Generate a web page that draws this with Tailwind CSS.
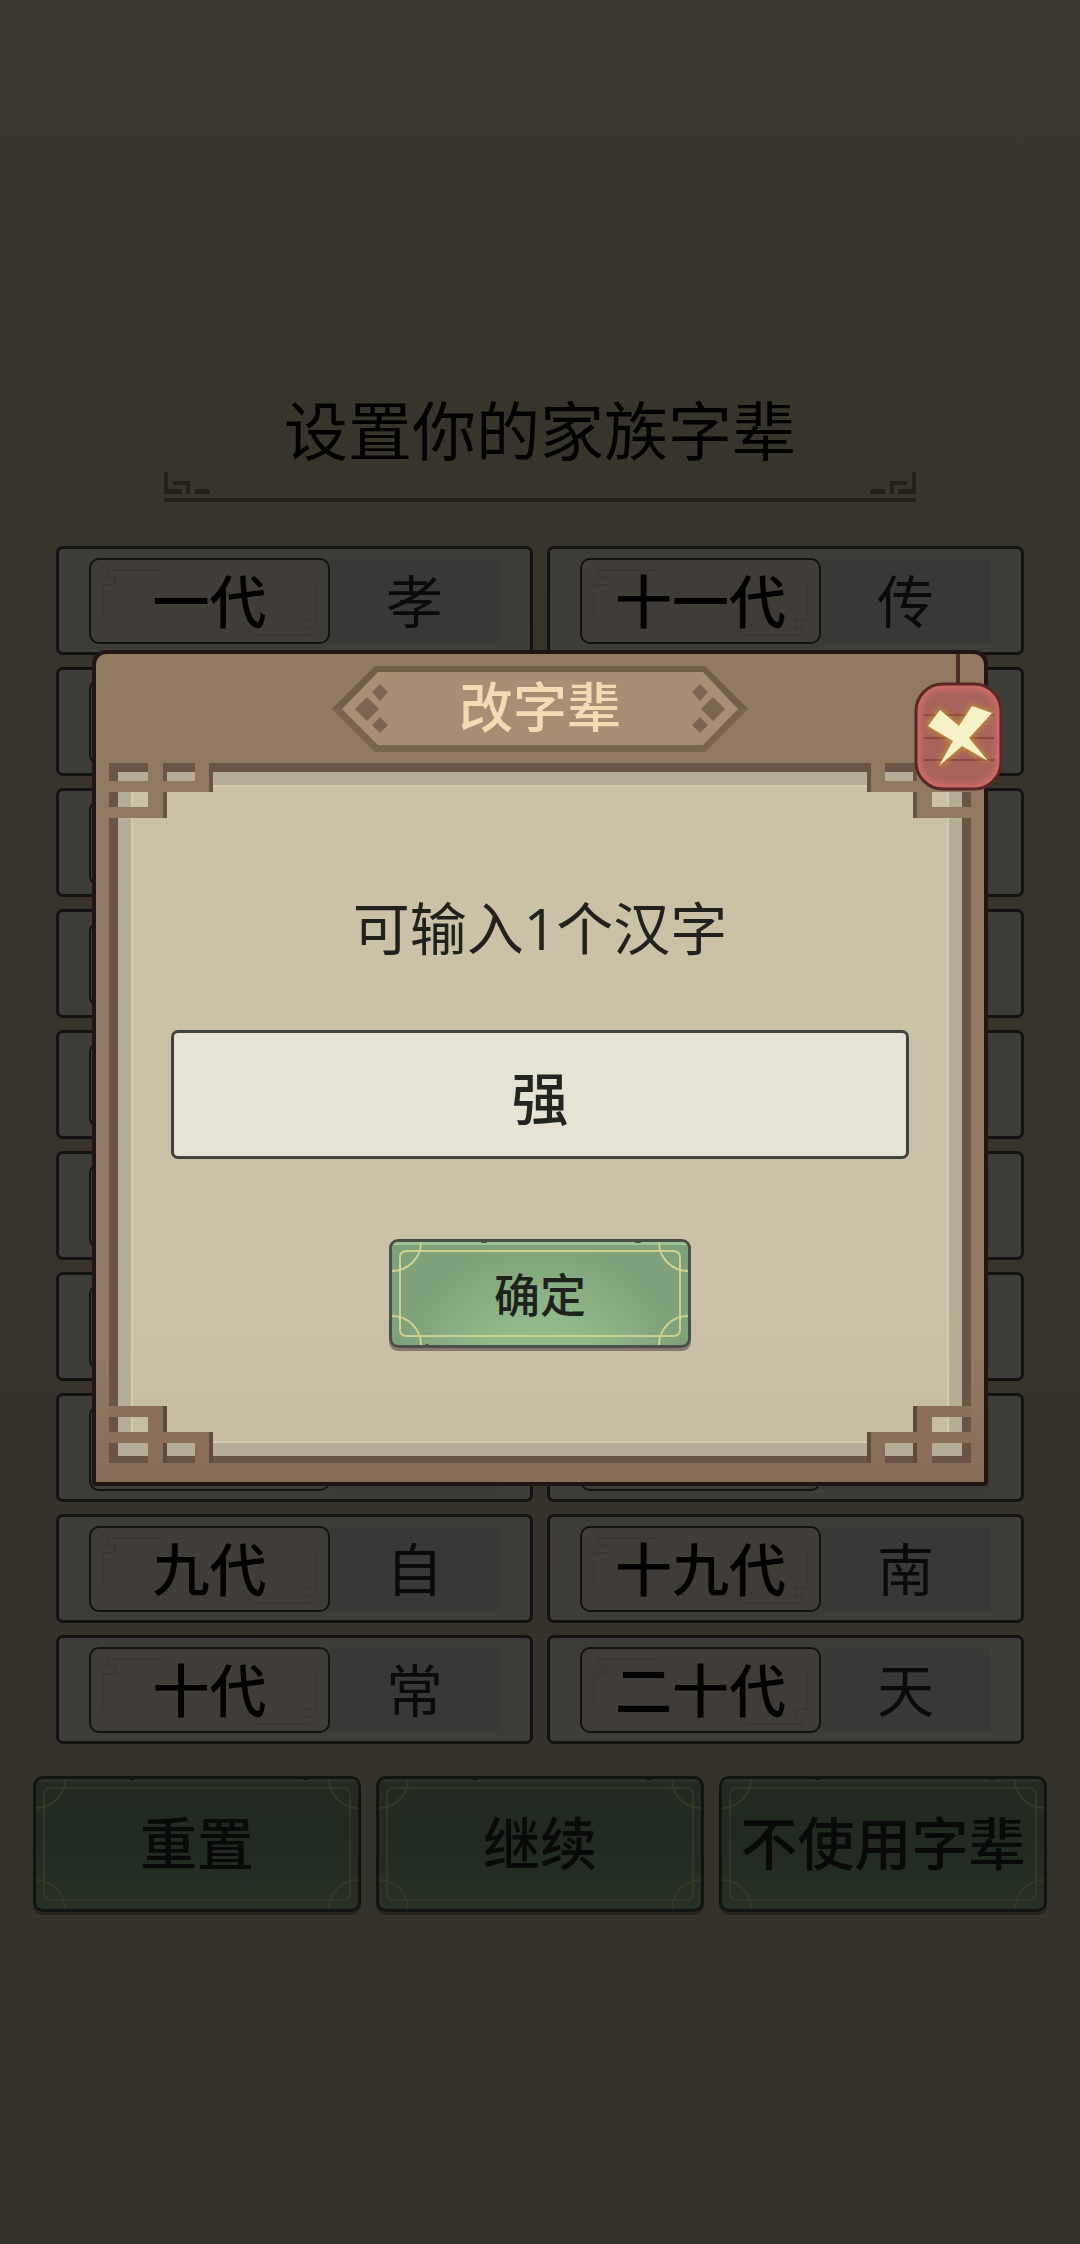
<!DOCTYPE html>
<html lang="zh-CN">
<head>
    <meta charset="UTF-8">
    <meta name="viewport" content="width=device-width, initial-scale=1.0">
    <title>设置你的家族字辈</title>
    <script src="https://cdn.jsdelivr.net/npm/@tailwindcss/browser@4"></script>
</head>
<body class="min-h-screen bg-[#37332b] bg-linear-to-b from-[#38352c] to-[#35312a] font-['Noto_Sans_CJK_SC',sans-serif] font-medium text-black">

    <!-- Generation name settings -->
    <main class="pt-[391px]">
        <header class="mx-[164px] border-b-4 border-[#201f1a] pb-1">
            <h1 class="text-center text-[64px] leading-[72px] font-normal whitespace-nowrap">设置你的家族字辈</h1>
            <div class="mt-[9px] flex justify-between">
                <svg class="w-[46px] h-[22px]" viewBox="0 0 46 22" fill="#201f1a" aria-hidden="true">
                    <path d="M0 0h4v17h14v5H0zM9 9h17v13h-4v-9H9zM31 17h14v5H31z"/>
                </svg>
                <svg class="w-[46px] h-[22px] -scale-x-100" viewBox="0 0 46 22" fill="#201f1a" aria-hidden="true">
                    <path d="M0 0h4v17h14v5H0zM9 9h17v13h-4v-9H9zM31 17h14v5H31z"/>
                </svg>
            </div>
        </header>

        <ul id="generationList" class="mt-11 mx-14 grid grid-cols-2 grid-rows-10 grid-flow-col gap-x-[14px] gap-y-3"></ul>

        <div class="mt-8 mx-[33px] grid grid-cols-3 gap-[15px]">
            <button type="button" class="dark-button relative h-[136px] overflow-hidden rounded-[10px] border-3 border-[#111311] bg-linear-to-b from-[#212920] via-[#212a20] to-[#263025] shadow-[0_3px_0_#26221e] pb-2 text-[57px] leading-none text-[#080908] whitespace-nowrap">重置</button>
            <button type="button" class="dark-button relative h-[136px] overflow-hidden rounded-[10px] border-3 border-[#111311] bg-linear-to-b from-[#212920] via-[#212a20] to-[#263025] shadow-[0_3px_0_#26221e] pb-2 text-[57px] leading-none text-[#080908] whitespace-nowrap">继续</button>
            <button type="button" class="dark-button relative h-[136px] overflow-hidden rounded-[10px] border-3 border-[#111311] bg-linear-to-b from-[#212920] via-[#212a20] to-[#263025] shadow-[0_3px_0_#26221e] pb-2 text-[57px] leading-none text-[#080908] whitespace-nowrap">不使用字辈</button>
        </div>
    </main>

    <!-- Rename dialog -->
    <div id="renameDialog" role="dialog" aria-modal="true" aria-labelledby="dialogTitle" class="fixed inset-0 flex items-center px-[92px] pb-[108px]">
        <div class="relative w-full rounded-t-[14px] rounded-b-[4px] border-4 border-[#231312] bg-[#917860] bg-linear-to-b from-[#917860] from-85% to-[#876d58]">

            <div class="relative mx-auto mt-3 h-[86px] w-[416px] flex items-center justify-center">
                <svg class="absolute inset-0 w-[416px] h-[86px]" viewBox="0 0 416 86" aria-hidden="true">
                    <path d="M0 43L43 0h330l43 43-43 43H43z" fill="#79644f"/>
                    <path d="M0 43L43 0h330l43 43z" fill="#705d4a"/>
                    <path d="M10 43L46 6h325l35 37-35 36H46z" fill="#a98d74"/>
                    <g fill="#7a6652">
                        <path d="M35 31l12 12-12 12-12-12zM48 18l8 8-8 9-8-9zM48 51l8 8-8 8-8-8z"/>
                        <path d="M381 31l12 12-12 12-12-12zM368 18l8 8-8 9-8-9zM368 51l8 8-8 8-8-8z"/>
                    </g>
                </svg>
                <h2 id="dialogTitle" class="relative pb-2 text-[54px] leading-none text-[#f5dab3]">改字辈</h2>
            </div>

            <!-- String and close tag -->
            <span class="absolute top-0 right-6 w-1 h-8 bg-[#4f2a27]"></span>
            <button type="button" id="closeDialog" aria-label="关闭" class="absolute top-7 -right-[19px] z-10 w-[89px] h-[109px]">
                <svg class="w-[89px] h-[109px]" viewBox="0 0 89 109" aria-hidden="true">
                    <defs>
                        <filter id="tagGlow" x="-20%" y="-20%" width="140%" height="140%"><feGaussianBlur stdDeviation="3"/></filter>
                        <clipPath id="tagShape"><rect x="2" y="2" width="85" height="105" rx="27"/></clipPath>
                    </defs>
                    <rect x="2" y="2" width="85" height="105" rx="27" fill="#a8635c"/>
                    <g clip-path="url(#tagShape)">
                        <rect x="2" y="2" width="85" height="105" rx="27" fill="none" stroke="#d66c69" stroke-width="10" filter="url(#tagGlow)"/>
                    </g>
                    <path d="M10 33h70M10 56h70M10 78h70" stroke="#8d4741" stroke-width="2"/>
                    <rect x="2" y="2" width="85" height="105" rx="27" fill="none" stroke="#562826" stroke-width="3"/>
                    <path d="M26 28l19 16 13-20 20 7-23 25 19 23-26-15-23 20 14-25-25-15z" fill="#c19a2c" stroke="#c19a2c" stroke-width="2" filter="url(#tagGlow)"/>
                    <path d="M26 28l19 16 13-20 20 7-23 25 19 23-26-15-23 20 14-25-25-15z" fill="#f6f1c6"/>
                </svg>
            </button>

            <!-- Paper panel with fretwork corners -->
            <div class="relative mx-[13px] mt-[11px] mb-[19px] border-9 border-b-7 border-[#6a5446]">
                <div class="border-13 border-[#b5ad97]">
                    <form id="rename-form" class="flex flex-col items-center border-2 border-[#d3cab0] bg-[#cbc1a6] bg-linear-to-b from-[#cbc1a6] from-80% to-[#c6bc9f] px-[38px] pt-[109px] pb-[93px]">
                        <label for="generation-word" class="font-['Open_Sans','Noto_Sans_CJK_SC',sans-serif] text-[57px] leading-[64px] font-normal text-[#20221e] whitespace-nowrap">可输入1个汉字</label>
                        <input type="text" id="generation-word" value="强" maxlength="1" autocomplete="off" class="mt-[70px] w-full h-[129px] rounded-[7px] border-3 border-[#40423e] bg-[#e6e3d4] text-center text-[57px] leading-none text-[#232521] outline-none">
                        <button type="submit" class="light-button relative mt-20 w-[302px] h-[109px] overflow-hidden rounded-[9px] border-3 border-[#4b4f49] bg-radial-[at_50%_150%] from-[#93bc8c] from-30% to-[#7fa17b] to-70% shadow-[0_3px_0_#85776c] pb-1 text-[46px] leading-none text-[#1d231c]">确定</button>
                    </form>
                </div>

                <svg class="absolute -top-[9px] -left-[9px] w-[104px] h-[55px]" viewBox="0 0 104 55" aria-hidden="true">
                    <path d="M54 0h4v55h-4zM100 0h4v29h-4z" fill="#6a5446"/>
                    <path d="M39 0h15v55H0V44h39zM0 18h100v11H0zM86 0h14v29H86z" fill="#917860"/>
                </svg>
                <svg class="absolute -top-[9px] -right-[9px] w-[104px] h-[55px] -scale-x-100" viewBox="0 0 104 55" aria-hidden="true">
                    <path d="M54 0h4v55h-4zM100 0h4v29h-4z" fill="#6a5446"/>
                    <path d="M39 0h15v55H0V44h39zM0 18h100v11H0zM86 0h14v29H86z" fill="#917860"/>
                </svg>
                <svg class="absolute -bottom-[7px] -left-[9px] w-[104px] h-[57px]" viewBox="0 0 104 57" aria-hidden="true">
                    <path d="M54 0h4v57h-4zM100 26h4v31h-4z" fill="#5f4b3e"/>
                    <path d="M0 0h54v57H39V11H0zM0 26h100v31H86V37H0z" fill="#8a705a"/>
                </svg>
                <svg class="absolute -bottom-[7px] -right-[9px] w-[104px] h-[57px] -scale-x-100" viewBox="0 0 104 57" aria-hidden="true">
                    <path d="M54 0h4v57h-4zM100 26h4v31h-4z" fill="#5f4b3e"/>
                    <path d="M0 0h54v57H39V11H0zM0 26h100v31H86V37H0z" fill="#8a705a"/>
                </svg>
            </div>
        </div>
    </div>

    <script>
        const generations = [
            ['一代', '孝'], ['二代', ''], ['三代', ''], ['四代', ''], ['五代', ''],
            ['六代', ''], ['七代', ''], ['八代', ''], ['九代', '自'], ['十代', '常'],
            ['十一代', '传'], ['十二代', ''], ['十三代', ''], ['十四代', ''], ['十五代', ''],
            ['十六代', ''], ['十七代', ''], ['十八代', ''], ['十九代', '南'], ['二十代', '天']
        ];

        // Build one row for each generation
        document.getElementById('generationList').innerHTML = generations.map(([name, word]) => `
            <li class="h-[109px] flex items-center rounded-[7px] border-3 border-[#121212] bg-[#3e3c38] pl-[30px] pr-[31px]">
                <span class="relative h-[86px] w-[241px] shrink-0 flex items-center justify-center rounded-[10px] border-2 border-[#121212] bg-[#403d38] pb-1 text-[57px] leading-none whitespace-nowrap">
                    <svg class="absolute inset-0 w-full h-full" viewBox="0 0 237 82" fill="none" stroke="#3b3731" stroke-width="2" aria-hidden="true">
                        <path d="M74 10H16v7h8v8H12v34"/>
                        <path d="M163 75h58v-7h-8v-8h12V26"/>
                    </svg>
                    <span class="relative">${word ? name : ''}</span>
                </span>
                <button type="button" aria-label="修改${name}" class="h-[82px] grow bg-[#383837] pb-1 text-[57px] leading-none font-normal text-[#0a0a0a]">${word}</button>
            </li>`).join('');

        // Gold line, corner arcs and chipped edges of the jade buttons
        document.querySelectorAll('.light-button').forEach(button => {
            button.insertAdjacentHTML('beforeend', `
                <span class="absolute inset-x-0 top-0 h-[3px] bg-[#9cc493]"></span>
                <span class="absolute inset-x-[7px] inset-y-2 rounded-[7px] border-2 border-[#ced28f]"></span>
                <span class="absolute -top-[30px] -left-[30px] size-[60px] rounded-full border-2 border-[#ced28f]"></span>
                <span class="absolute -top-[30px] -right-[30px] size-[60px] rounded-full border-2 border-[#ced28f]"></span>
                <span class="absolute -bottom-[30px] -left-[30px] size-[60px] rounded-full border-2 border-[#ced28f]"></span>
                <span class="absolute -bottom-[30px] -right-[30px] size-[60px] rounded-full border-2 border-[#ced28f]"></span>
                <span class="absolute -top-px left-[30%] w-[6px] h-[2px] rounded-full bg-[#4b4f49]"></span>
                <span class="absolute -top-px left-[82%] w-[6px] h-[2px] rounded-full bg-[#4b4f49]"></span>
                <span class="absolute -bottom-px left-[11%] w-1 h-[2px] rounded-full bg-[#4b4f49]"></span>`);
        });
        document.querySelectorAll('.dark-button').forEach(button => {
            button.insertAdjacentHTML('beforeend', `
                <span class="absolute inset-x-0 top-0 h-[3px] bg-[#293328]"></span>
                <span class="absolute inset-x-[7px] inset-y-2 rounded-[7px] border-2 border-[#353726]"></span>
                <span class="absolute -top-[30px] -left-[30px] size-[60px] rounded-full border-2 border-[#353726]"></span>
                <span class="absolute -top-[30px] -right-[30px] size-[60px] rounded-full border-2 border-[#353726]"></span>
                <span class="absolute -bottom-[30px] -left-[30px] size-[60px] rounded-full border-2 border-[#353726]"></span>
                <span class="absolute -bottom-[30px] -right-[30px] size-[60px] rounded-full border-2 border-[#353726]"></span>
                <span class="absolute -top-px left-[29%] w-[6px] h-[2px] rounded-full bg-[#111311]"></span>
                <span class="absolute -top-px left-[83%] w-[6px] h-[2px] rounded-full bg-[#111311]"></span>`);
        });

        const renameDialog = document.getElementById('renameDialog');
        document.getElementById('closeDialog').addEventListener('click', () => {
            renameDialog.classList.add('hidden');
        });
        document.getElementById('rename-form').addEventListener('submit', function(event) {
            event.preventDefault();
            renameDialog.classList.add('hidden');
        });
    </script>
</body>
</html>
